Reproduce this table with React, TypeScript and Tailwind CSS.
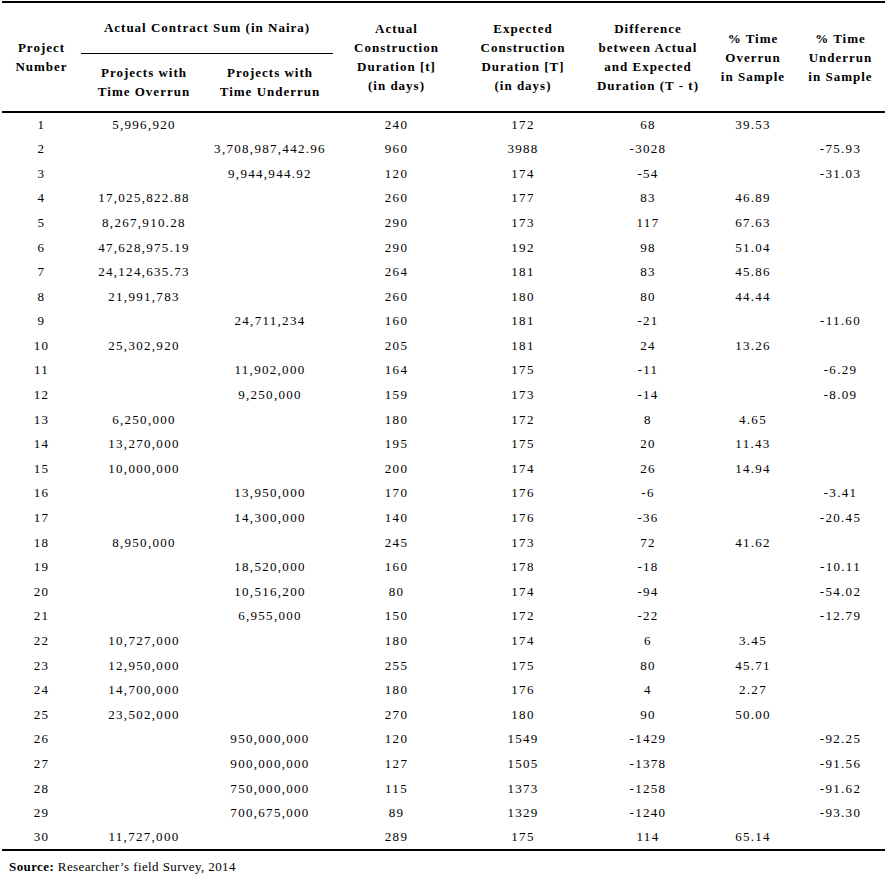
const rows: string[][] = [
  ["1", "5,996,920", "", "240", "172", "68", "39.53", ""],
  ["2", "", "3,708,987,442.96", "960", "3988", "-3028", "", "-75.93"],
  ["3", "", "9,944,944.92", "120", "174", "-54", "", "-31.03"],
  ["4", "17,025,822.88", "", "260", "177", "83", "46.89", ""],
  ["5", "8,267,910.28", "", "290", "173", "117", "67.63", ""],
  ["6", "47,628,975.19", "", "290", "192", "98", "51.04", ""],
  ["7", "24,124,635.73", "", "264", "181", "83", "45.86", ""],
  ["8", "21,991,783", "", "260", "180", "80", "44.44", ""],
  ["9", "", "24,711,234", "160", "181", "-21", "", "-11.60"],
  ["10", "25,302,920", "", "205", "181", "24", "13.26", ""],
  ["11", "", "11,902,000", "164", "175", "-11", "", "-6.29"],
  ["12", "", "9,250,000", "159", "173", "-14", "", "-8.09"],
  ["13", "6,250,000", "", "180", "172", "8", "4.65", ""],
  ["14", "13,270,000", "", "195", "175", "20", "11.43", ""],
  ["15", "10,000,000", "", "200", "174", "26", "14.94", ""],
  ["16", "", "13,950,000", "170", "176", "-6", "", "-3.41"],
  ["17", "", "14,300,000", "140", "176", "-36", "", "-20.45"],
  ["18", "8,950,000", "", "245", "173", "72", "41.62", ""],
  ["19", "", "18,520,000", "160", "178", "-18", "", "-10.11"],
  ["20", "", "10,516,200", "80", "174", "-94", "", "-54.02"],
  ["21", "", "6,955,000", "150", "172", "-22", "", "-12.79"],
  ["22", "10,727,000", "", "180", "174", "6", "3.45", ""],
  ["23", "12,950,000", "", "255", "175", "80", "45.71", ""],
  ["24", "14,700,000", "", "180", "176", "4", "2.27", ""],
  ["25", "23,502,000", "", "270", "180", "90", "50.00", ""],
  ["26", "", "950,000,000", "120", "1549", "-1429", "", "-92.25"],
  ["27", "", "900,000,000", "127", "1505", "-1378", "", "-91.56"],
  ["28", "", "750,000,000", "115", "1373", "-1258", "", "-91.62"],
  ["29", "", "700,675,000", "89", "1329", "-1240", "", "-93.30"],
  ["30", "11,727,000", "", "289", "175", "114", "65.14", ""],
];

export default function App() {
  return (
    <div
      className="bg-white pl-[2px] pt-[1px] text-black"
      style={{ fontFamily: '"Liberation Serif", "Times New Roman", serif' }}
    >
      <table className="w-[883px] table-fixed border-collapse text-[13px]">
        <colgroup>
          <col className="w-[79px]" />
          <col className="w-[126px]" />
          <col className="w-[126px]" />
          <col className="w-[127px]" />
          <col className="w-[126px]" />
          <col className="w-[124px]" />
          <col className="w-[86px]" />
          <col className="w-[89px]" />
        </colgroup>
        <thead className="font-bold leading-[19px] tracking-[1px]">
          <tr className="h-[51px] border-t-2 border-black">
            <th rowSpan={2} className="p-0 text-center align-middle">
              Project
              <br />
              Number
            </th>
            <th colSpan={2} className="border-b border-black p-0 text-center align-middle">
              Actual Contract Sum (in Naira)
            </th>
            <th rowSpan={2} className="p-0 text-center align-middle">
              Actual
              <br />
              Construction
              <br />
              Duration [t]
              <br />
              (in days)
            </th>
            <th rowSpan={2} className="p-0 text-center align-middle">
              Expected
              <br />
              Construction
              <br />
              Duration [T]
              <br />
              (in days)
            </th>
            <th rowSpan={2} className="p-0 text-center align-middle">
              Difference
              <br />
              between Actual
              <br />
              and Expected
              <br />
              Duration (T - t)
            </th>
            <th rowSpan={2} className="p-0 text-center align-middle">
              % Time
              <br />
              Overrun
              <br />
              in Sample
            </th>
            <th rowSpan={2} className="p-0 text-center align-middle">
              % Time
              <br />
              Underrun
              <br />
              in Sample
            </th>
          </tr>
          <tr className="h-[59px] border-b-2 border-black">
            <th className="p-0 text-center align-middle">
              Projects with
              <br />
              Time Overrun
            </th>
            <th className="p-0 text-center align-middle">
              Projects with
              <br />
              Time Underrun
            </th>
          </tr>
        </thead>
        <tbody className="border-b-2 border-black tracking-[1.3px]">
          {rows.map((r) => (
            <tr key={r[0]} className="h-[24.6px]">
              {r.map((c, i) => (
                <td key={i} className="p-0 text-center align-middle">
                  {c}
                </td>
              ))}
            </tr>
          ))}
        </tbody>
      </table>
      <p className="mt-[6px] pl-[7px] text-[13px] tracking-[0.4px]">
        <b>Source:</b> Researcher’s field Survey, 2014
      </p>
    </div>
  );
}
